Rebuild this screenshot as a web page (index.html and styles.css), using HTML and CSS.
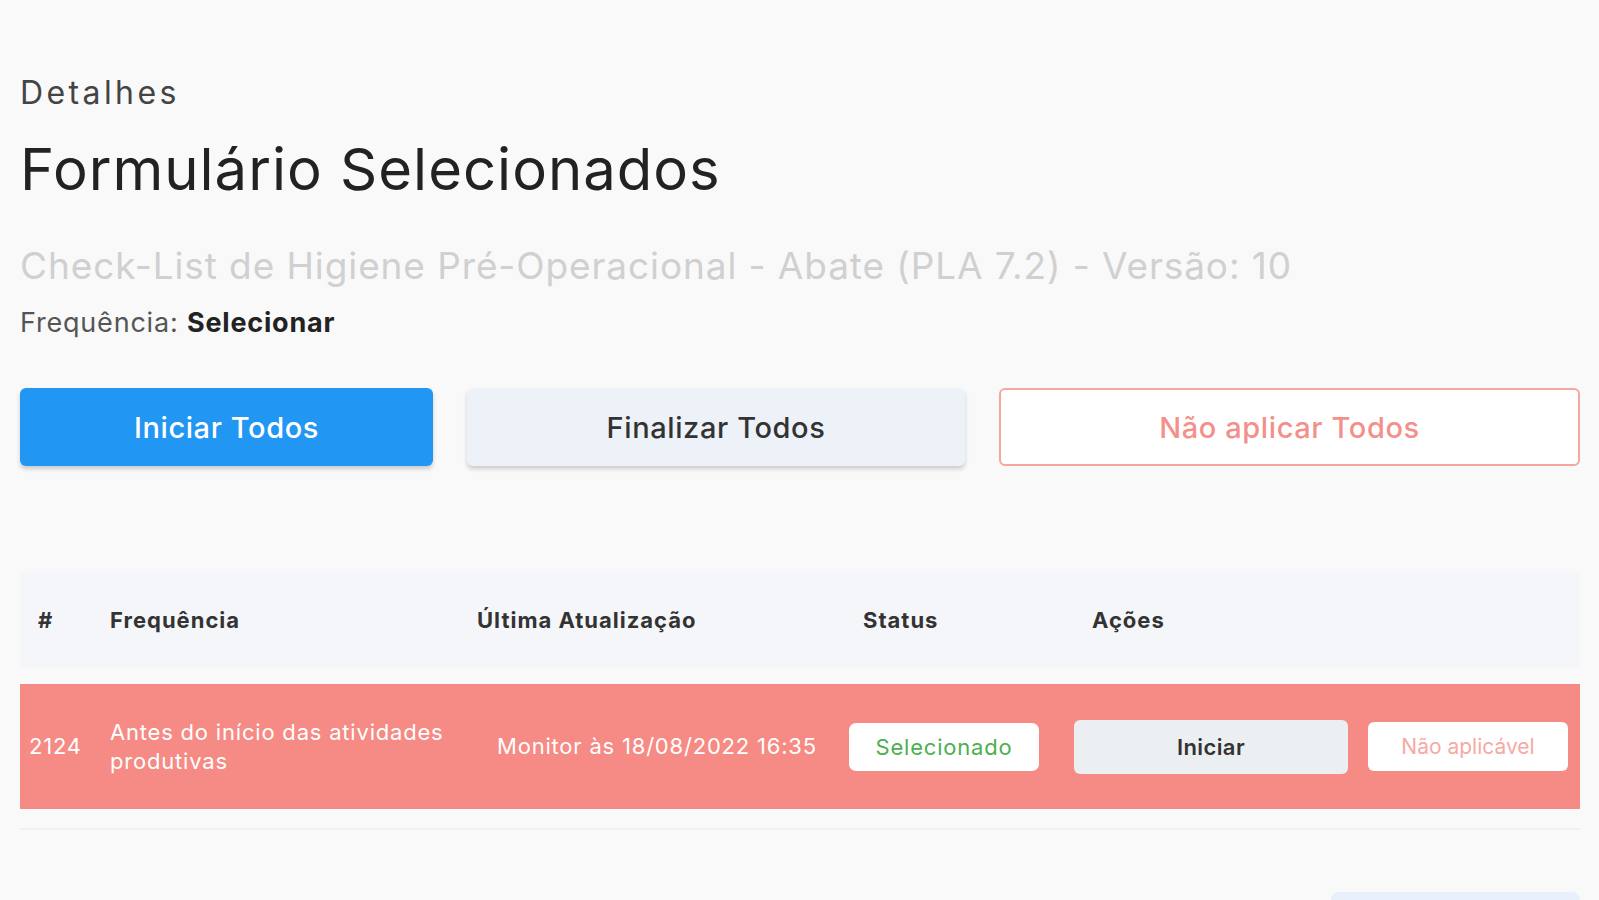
FILE: index.html
```html
<!DOCTYPE html>
<html lang="pt-BR">
<head>
    <meta charset="UTF-8">
    <meta name="viewport" content="width=device-width, initial-scale=1.0">
    <title>Formulário Selecionados</title>
    <link rel="stylesheet" href="styles.css">
</head>
<body>
    <div class="page">
        <div class="crumb">Detalhes</div>
        <h1 class="title">Formulário Selecionados</h1>
        <h2 class="subtitle">Check-List de Higiene Pré-Operacional - Abate (PLA 7.2) - Versão: 10</h2>
        <div class="freq">Frequência: <strong>Selecionar</strong></div>

        <div class="actions">
            <button class="btn btn-primary">Iniciar Todos</button>
            <button class="btn btn-light">Finalizar Todos</button>
            <button class="btn btn-outline">Não aplicar Todos</button>
        </div>

        <table class="list">
            <thead>
                <tr>
                    <th class="col-id">#</th>
                    <th class="col-freq">Frequência</th>
                    <th class="col-date">Última Atualização</th>
                    <th class="col-status">Status</th>
                    <th class="col-actions" colspan="2">Ações</th>
                </tr>
            </thead>
            <tbody>
                <tr class="row-late">
                    <td class="col-id">2124</td>
                    <td class="col-freq">Antes do início das atividades produtivas</td>
                    <td class="col-date">Monitor às 18/08/2022 16:35</td>
                    <td class="col-status"><span class="badge">Selecionado</span></td>
                    <td class="col-start"><button class="row-btn">Iniciar</button></td>
                    <td class="col-na"><button class="row-na">Não aplicável</button></td>
                </tr>
            </tbody>
        </table>
        <div class="divider"></div>

        <div class="footer">
            <div class="btn-more"></div>
        </div>
    </div>
</body>
</html>
```

FILE: styles.css
```css
* {
    box-sizing: border-box;
}
body {
    margin: 0;
    height: 900px;
    background: #f9f9fa;
    font-family: Inter, "Noto Sans", sans-serif;
    color: #333;
    overflow: hidden;
}
.page {
    padding: 0 19px 0 20px;
}
.crumb {
    margin-top: 75px;
    font-size: 32px;
    line-height: 36px;
    letter-spacing: 3.4px;
    color: #444;
}
.title {
    margin: 26px 0 0;
    font-size: 58px;
    line-height: 64px;
    font-weight: 400;
    letter-spacing: 1px;
    color: #222;
}
.subtitle {
    margin: 45px 0 0;
    font-size: 37px;
    line-height: 40px;
    font-weight: 400;
    letter-spacing: 0.9px;
    color: #d0d0d0;
}
.freq {
    margin-top: 22px;
    font-size: 27px;
    line-height: 30px;
    letter-spacing: 0.8px;
    color: #555;
}
.freq strong {
    color: #222;
}
.actions {
    margin-top: 50px;
    display: grid;
    grid-template-columns: 413px 498px 1fr;
    gap: 34px;
}
.btn {
    height: 78px;
    border-radius: 6px;
    font-family: Inter, sans-serif;
    font-size: 29px;
    font-weight: 500;
    letter-spacing: 0.6px;
    cursor: pointer;
}
.btn-primary {
    background: #2196f3;
    color: #fff;
    border: none;
    box-shadow: 0 3px 4px rgba(0, 0, 0, 0.18);
}
.btn-light {
    background: #edf2f9;
    color: #333;
    border: none;
    box-shadow: 0 3px 4px rgba(0, 0, 0, 0.18);
}
.btn-outline {
    background: #fff;
    color: #f4908b;
    border: 2px solid #f6a5a1;
}
.list {
    width: 100%;
    margin: 89px 0 -16px;
    border-collapse: separate;
    border-spacing: 0 16px;
}
.list th {
    background: #f4f6f9;
    height: 97px;
    text-align: left;
    font-size: 22px;
    font-weight: 700;
    letter-spacing: 1px;
    color: #333;
    padding: 0;
}
.list td {
    background: #f68a84;
    height: 125px;
    color: #fff;
    font-size: 22px;
    line-height: 29px;
    letter-spacing: 0.8px;
    padding: 0;
}
.list th.col-id {
    width: 90px;
    padding-left: 18px;
}
.list td.col-id {
    padding-left: 9px;
}
.col-freq {
    width: 367px;
}
.list td.col-freq {
    padding-right: 20px;
}
.col-date {
    width: 372px;
}
.list td.col-date {
    padding-left: 20px;
}
.col-status {
    width: 225px;
}
.list th.col-status {
    padding-left: 14px;
}
.list th.col-actions {
    padding-left: 18px;
}
.badge {
    display: inline-block;
    width: 190px;
    height: 48px;
    line-height: 48px;
    background: #fff;
    border-radius: 7px;
    color: #4caf50;
    text-align: center;
}
.row-btn {
    width: 274px;
    height: 54px;
    border: none;
    border-radius: 6px;
    background: #eceff2;
    color: #333;
    font-family: Inter, sans-serif;
    font-size: 22px;
    font-weight: 600;
    letter-spacing: 0.4px;
}
.list td.col-na {
    text-align: right;
    padding-right: 12px;
}
.row-na {
    width: 200px;
    height: 49px;
    border: none;
    border-radius: 6px;
    background: #fff;
    color: #f6a9a5;
    font-family: Inter, sans-serif;
    font-size: 21px;
}
.divider {
    height: 2px;
    margin-top: 19px;
    background: #f0f0f1;
}
.footer {
    display: flex;
    justify-content: flex-end;
    margin-top: 62px;
}
.btn-more {
    width: 249px;
    height: 8px;
    border-radius: 10px 10px 0 0;
    background: #e8f0fb;
}
```
